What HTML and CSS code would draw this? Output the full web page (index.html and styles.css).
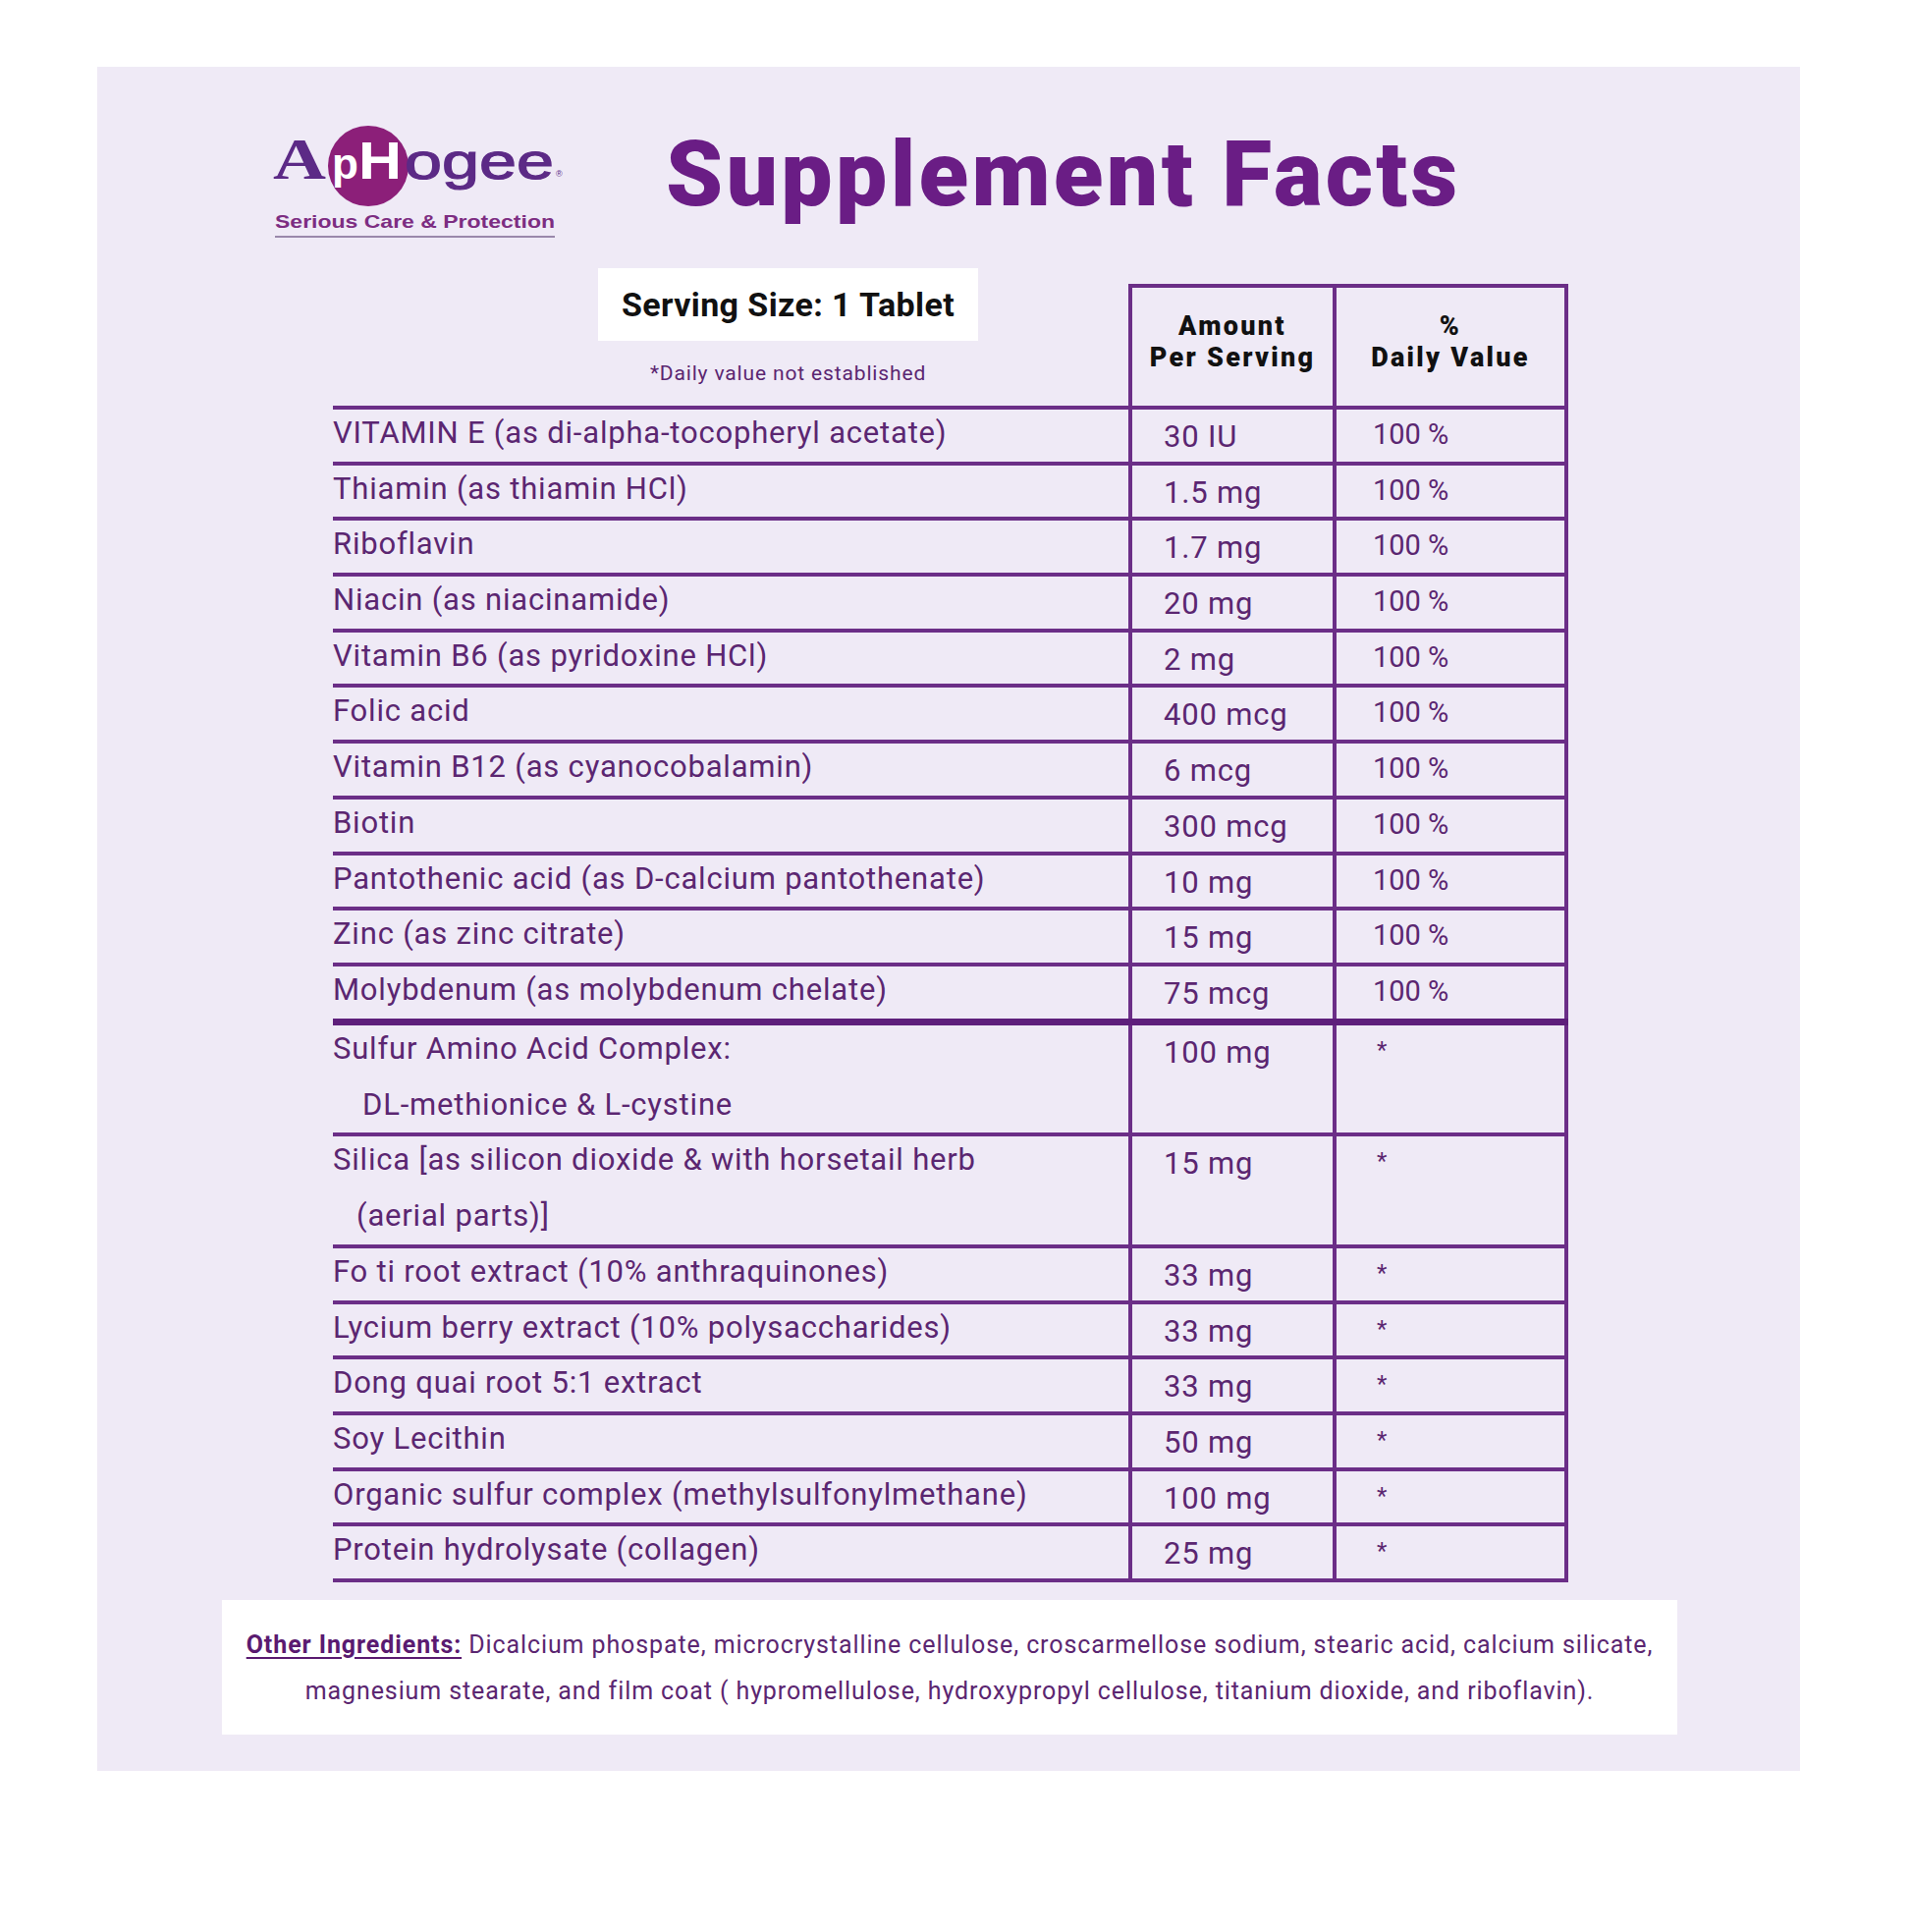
FILE: index.html
```html
<!DOCTYPE html>
<html lang="en">
<head>
<meta charset="utf-8">
<title>Supplement Facts</title>
<link rel="stylesheet" href="styles.css">
</head>
<body>
<div class="panel">
  <div class="brand-row">
    <svg class="logo" width="320" height="125" viewBox="0 0 320 125" xmlns="http://www.w3.org/2000/svg">
      <text x="8" y="63" class="logo-a" textLength="54" lengthAdjust="spacingAndGlyphs">A</text>
      <circle cx="105" cy="50" r="41" fill="#8c1f79"/>
      <text x="68" y="63" class="logo-p">p</text>
      <text x="95" y="63" class="logo-h" textLength="44" lengthAdjust="spacingAndGlyphs">H</text>
      <text x="142" y="63" class="logo-ogee" textLength="152" lengthAdjust="spacingAndGlyphs">ogee</text>
      <text x="296" y="61" class="logo-r">®</text>
      <text x="10" y="113" class="logo-tag" textLength="285" lengthAdjust="spacingAndGlyphs">Serious Care &amp; Protection</text>
      <rect x="10" y="121" width="285" height="2" fill="#9a88ab"/>
    </svg>
    <h1 class="title">Supplement Facts</h1>
  </div>

  <div class="facts">
    <div class="head">
      <div class="head-left">
        <div class="serving-wrap">
          <div class="serving">Serving Size: 1 Tablet</div>
          <div class="note">*Daily value not established</div>
        </div>
      </div>
      <div class="head-cell head-amt"><span class="head-line">Amount</span><span class="head-line">Per Serving</span></div>
      <div class="head-cell head-dv"><span class="head-line">%</span><span class="head-line">Daily Value</span></div>
    </div>

    <div class="row"><div class="name">VITAMIN E (as di-alpha-tocopheryl acetate)</div><div class="amt">30 IU</div><div class="dv">100 %</div></div>
    <div class="row"><div class="name">Thiamin (as thiamin HCl)</div><div class="amt">1.5 mg</div><div class="dv">100 %</div></div>
    <div class="row"><div class="name">Riboflavin</div><div class="amt">1.7 mg</div><div class="dv">100 %</div></div>
    <div class="row"><div class="name">Niacin (as niacinamide)</div><div class="amt">20 mg</div><div class="dv">100 %</div></div>
    <div class="row"><div class="name">Vitamin B6 (as pyridoxine HCl)</div><div class="amt">2 mg</div><div class="dv">100 %</div></div>
    <div class="row"><div class="name">Folic acid</div><div class="amt">400 mcg</div><div class="dv">100 %</div></div>
    <div class="row"><div class="name">Vitamin B12 (as cyanocobalamin)</div><div class="amt">6 mcg</div><div class="dv">100 %</div></div>
    <div class="row"><div class="name">Biotin</div><div class="amt">300 mcg</div><div class="dv">100 %</div></div>
    <div class="row"><div class="name">Pantothenic acid (as D-calcium pantothenate)</div><div class="amt">10 mg</div><div class="dv">100 %</div></div>
    <div class="row"><div class="name">Zinc (as zinc citrate)</div><div class="amt">15 mg</div><div class="dv">100 %</div></div>
    <div class="row row-thick"><div class="name">Molybdenum (as molybdenum chelate)</div><div class="amt">75 mcg</div><div class="dv">100 %</div></div>
    <div class="row row-double"><div class="name"><span class="l1">Sulfur Amino Acid Complex:</span><span class="l2 indent-a">DL-methionice &amp; L-cystine</span></div><div class="amt">100 mg</div><div class="dv star">*</div></div>
    <div class="row row-double"><div class="name"><span class="l1">Silica [as silicon dioxide &amp; with horsetail herb</span><span class="l2 indent-b">(aerial parts)]</span></div><div class="amt">15 mg</div><div class="dv star">*</div></div>
    <div class="row"><div class="name">Fo ti root extract (10% anthraquinones)</div><div class="amt">33 mg</div><div class="dv star">*</div></div>
    <div class="row"><div class="name">Lycium berry extract (10% polysaccharides)</div><div class="amt">33 mg</div><div class="dv star">*</div></div>
    <div class="row"><div class="name">Dong quai root 5:1 extract</div><div class="amt">33 mg</div><div class="dv star">*</div></div>
    <div class="row"><div class="name">Soy Lecithin</div><div class="amt">50 mg</div><div class="dv star">*</div></div>
    <div class="row"><div class="name">Organic sulfur complex (methylsulfonylmethane)</div><div class="amt">100 mg</div><div class="dv star">*</div></div>
    <div class="row"><div class="name">Protein hydrolysate (collagen)</div><div class="amt">25 mg</div><div class="dv star">*</div></div>
  </div>

  <div class="other">
    <p><span class="other-label">Other Ingredients:</span> Dicalcium phospate, microcrystalline cellulose, croscarmellose sodium, stearic acid, calcium silicate,<br>magnesium stearate, and film coat ( hypromellulose, hydroxypropyl cellulose, titanium dioxide, and riboflavin).</p>
  </div>
</div>
</body>
</html>
```

FILE: styles.css
```css
* { box-sizing: border-box; }

html, body {
  margin: 0;
  padding: 0;
  background: #ffffff;
}

body {
  font-family: Roboto, "Liberation Sans", Arial, sans-serif;
  color: #5b2671;
}

.panel {
  width: 1734px;
  height: 1735px;
  margin: 68px 0 0 99px;
  padding-top: 51px;
  background: #efeaf6;
}

/* ---------- brand row ---------- */
.brand-row {
  display: flex;
  align-items: flex-start;
  height: 154px;
}

.logo {
  display: block;
  margin-left: 171px;
  flex: none;
}

.logo-a {
  font-family: "Liberation Serif", "Times New Roman", serif;
  font-weight: 700;
  font-size: 60px;
  fill: #5c2a86;
}

.logo-p {
  font-family: "Liberation Sans", Arial, sans-serif;
  font-weight: 700;
  font-size: 44px;
  fill: #ffffff;
}

.logo-h {
  font-family: "Liberation Sans", Arial, sans-serif;
  font-weight: 700;
  font-size: 54px;
  fill: #ffffff;
}

.logo-ogee {
  font-family: "Liberation Sans", Arial, sans-serif;
  font-size: 52px;
  fill: #5c2a86;
  stroke: #5c2a86;
  stroke-width: 1.2px;
}

.logo-r {
  font-family: "Liberation Sans", Arial, sans-serif;
  font-size: 9px;
  fill: #5c2a86;
}

.logo-tag {
  font-family: "Liberation Sans", Arial, sans-serif;
  font-weight: 700;
  font-size: 19px;
  fill: #7d2d82;
}

.title {
  margin: 12px 0 0 88px;
  font-family: Roboto, "Liberation Sans", sans-serif;
  font-weight: 900;
  font-size: 93px;
  line-height: 93px;
  color: #6a1d85;
  letter-spacing: 3.3px;
  white-space: nowrap;
}

/* ---------- table ---------- */
.facts {
  margin-left: 240px;
  width: 1258px;
}

.head,
.row {
  display: grid;
  grid-template-columns: 810px 208px 240px;
}

.head-left {
  border-bottom: 4px solid #6b2e87;
}

.serving-wrap {
  width: 387px;
  margin-left: 270px;
  text-align: center;
}

.serving {
  height: 74px;
  background: #ffffff;
  font-weight: 700;
  font-size: 34px;
  letter-spacing: 0.4px;
  line-height: 74px;
  color: #111111;
}

.note {
  margin-top: 21px;
  font-size: 21px;
  letter-spacing: 0.85px;
  line-height: 24px;
  color: #5b2671;
}

.head-cell {
  margin-top: 16px;
  height: 128px;
  padding-top: 23px;
  border-top: 4px solid #6b2e87;
  border-left: 4px solid #6b2e87;
  border-bottom: 4px solid #6b2e87;
  text-align: center;
  font-weight: 900;
  font-size: 27px;
  letter-spacing: 2.3px;
  color: #111111;
}

.head-line {
  display: block;
  line-height: 32px;
  height: 32px;
}

.head-dv {
  border-right: 4px solid #6b2e87;
}

.row {
  border-bottom: 4px solid #6b2e87;
  font-size: 31px;
  letter-spacing: 0.8px;
}

.row-thick {
  border-bottom-width: 7px;
  border-bottom-color: #5e1f7b;
}

.name {
  line-height: 48px;
  padding-bottom: 4.7px;
  white-space: nowrap;
}

.amt {
  border-left: 4px solid #6b2e87;
  padding-left: 32px;
  padding-top: 4px;
  line-height: 48px;
}

.dv {
  border-left: 4px solid #6b2e87;
  border-right: 4px solid #6b2e87;
  padding-left: 37px;
  padding-top: 1px;
  line-height: 48px;
  font-size: 29px;
  letter-spacing: 0;
}

.star {
  padding-left: 41px;
  font-size: 24px;
}

.row-double .name .l1,
.row-double .name .l2 {
  display: block;
  line-height: 48px;
}

.row-double .name .l2 {
  margin-top: 9px;
}

.indent-a { padding-left: 30px; }
.indent-b { padding-left: 24px; }

/* ---------- other ingredients ---------- */
.other {
  margin: 18px 0 0 127px;
  width: 1482px;
  height: 137px;
  background: #ffffff;
  display: flex;
  align-items: center;
  justify-content: center;
}

.other p {
  margin: 0;
  text-align: center;
  font-size: 25px;
  letter-spacing: 0.9px;
  line-height: 47px;
  color: #5b2671;
  white-space: nowrap;
}

.other-label {
  font-weight: 700;
  color: #5a1a70;
  text-decoration: underline;
  text-underline-offset: 4px;
}
```
